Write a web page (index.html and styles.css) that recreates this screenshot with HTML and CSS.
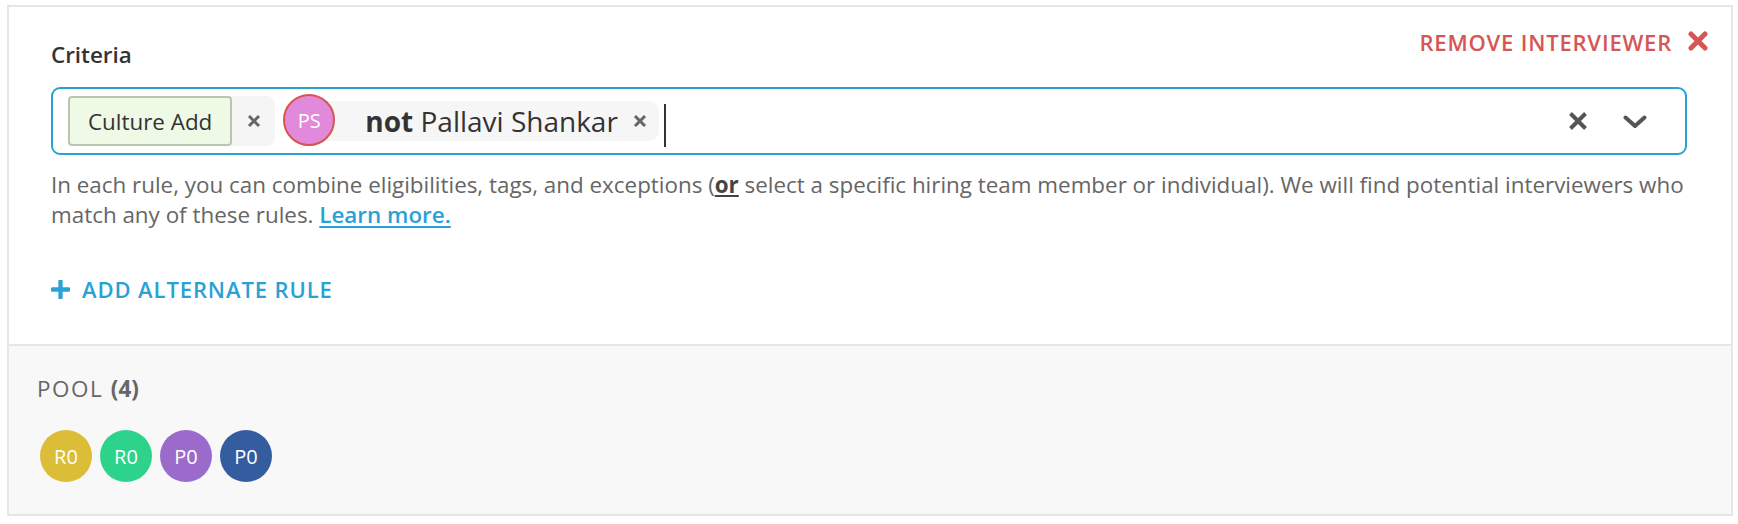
FILE: index.html
```html
<!DOCTYPE html>
<html>
<head>
<meta charset="utf-8">
<link rel="stylesheet" href="styles.css">
</head>
<body>
<div class="card">
  <section class="rule">
    <div class="rule-header">
      <div class="label">Criteria</div>
      <a class="remove">REMOVE INTERVIEWER
        <svg class="remove-x" viewBox="0 0 20 20" width="20" height="20"><path d="M3 3L17 17M17 3L3 17" stroke="#d65555" stroke-width="5" stroke-linecap="round"/></svg>
      </a>
    </div>
    <div class="select">
      <div class="values">
        <div class="tag-wrap">
          <span class="tag">Culture Add</span>
          <svg class="tag-x" viewBox="0 0 14 14" width="14" height="14"><path d="M2 2L12 12M12 2L2 12" stroke="#666" stroke-width="3"/></svg>
        </div>
        <div class="person">
          <span class="avatar ps">PS</span>
          <span class="pill"><b>not</b>&nbsp;Pallavi Shankar
            <svg class="tag-x pill-x" viewBox="0 0 14 14" width="14" height="14"><path d="M2 2L12 12M12 2L2 12" stroke="#666" stroke-width="3"/></svg>
          </span>
        </div>
        <span class="cursor"></span>
      </div>
      <div class="controls">
        <svg viewBox="0 0 20 20" width="20" height="20"><path d="M2.5 2.5L17.5 17.5M17.5 2.5L2.5 17.5" stroke="#555" stroke-width="4"/></svg>
        <svg class="chev" viewBox="0 0 24 14" width="24" height="14"><path d="M2.5 2.5L12 11L21.5 2.5" fill="none" stroke="#555" stroke-width="4" stroke-linecap="round" stroke-linejoin="round"/></svg>
      </div>
    </div>
    <p class="help">In each rule, you can combine eligibilities, tags, and exceptions (<b class="or">or</b> select a specific hiring team member or individual). We will find potential interviewers who match any of these rules. <a class="learn">Learn more.</a></p>
    <a class="add-rule">
      <svg viewBox="0 0 20 20" width="19" height="19"><path d="M10 1.5V18.5M1.5 10H18.5" stroke="#2aa3d6" stroke-width="4.5" stroke-linecap="round"/></svg>
      <span>ADD ALTERNATE RULE</span>
    </a>
  </section>
  <section class="pool">
    <div class="pool-title">POOL <b>(4)</b></div>
    <div class="pool-list">
      <span class="avatar sm yellow">R0</span>
      <span class="avatar sm green">R0</span>
      <span class="avatar sm purple">P0</span>
      <span class="avatar sm blue">P0</span>
    </div>
  </section>
</div>
</body>
</html>
```

FILE: styles.css
```css
* { box-sizing: border-box; }
html, body { margin: 0; padding: 0; background: #fff; }
body {
  font-family: "Open Sans", "Noto Sans", "Liberation Sans", sans-serif;
  color: #333;
}
.card {
  margin: 5px 5px 0 7px;
  width: 1726px;
  border: 2px solid #e6e6e6;
}
.rule {
  padding: 20px 44px 40px 42px;
  background: #fff;
  border-bottom: 2px solid #e6e6e6;
}
.rule-header {
  display: flex;
  justify-content: space-between;
  align-items: flex-start;
  margin-right: -21px;
}
.label {
  font-size: 22.4px;
  font-weight: 600;
  line-height: 30px;
  padding-top: 13px;
  color: #333;
}
.remove {
  display: flex;
  align-items: center;
  gap: 16px;
  font-size: 22px;
  font-weight: 600;
  letter-spacing: 0.8px;
  line-height: 30px;
  color: #d65555;
}
.remove-x { margin-top: -2px; }
.select {
  margin-top: 17px;
  height: 68px;
  border: 2px solid #2aa1d3;
  border-radius: 9px;
  display: flex;
  align-items: center;
  justify-content: space-between;
  padding: 0 38px 0 15px;
}
.values {
  display: flex;
  align-items: center;
}
.tag-wrap {
  display: flex;
  align-items: center;
  height: 50px;
  background: #f5f5f5;
  border-radius: 8px;
}
.tag {
  display: flex;
  align-items: center;
  height: 50px;
  padding: 0 18px 0 18px;
  border: 2px solid #b9c8ad;
  border-radius: 4px;
  background: #eef9e6;
  font-size: 22.4px;
  color: #333;
}
.tag-x { margin: 0 14px 0 15px; display: block; }
.person {
  display: flex;
  align-items: center;
  margin-left: 8px;
}
.avatar {
  display: inline-flex;
  align-items: center;
  justify-content: center;
  border-radius: 50%;
  color: #fff;
  font-size: 20px;
  flex: none;
}
.ps {
  position: relative;
  z-index: 1;
  width: 52px;
  height: 52px;
  background: #e18adc;
  border: 2px solid #d9534f;
  margin-top: -2px;
}
.pill {
  display: flex;
  align-items: center;
  height: 40px;
  margin-left: -26px;
  padding: 0 0 0 56px;
  background: #f6f6f6;
  border-radius: 10px;
  font-size: 28px;
  color: #333;
  white-space: nowrap;
}
.pill b { font-weight: 700; }
.pill-x { margin: 0 12px 0 15px; }
.cursor {
  display: block;
  width: 2px;
  height: 43px;
  background: #333;
  margin-left: 5px;
  margin-top: 9px;
}
.controls {
  display: flex;
  align-items: center;
  gap: 35px;
}
.chev { margin-top: 2px; }
.help {
  margin: 15px 0 0;
  font-size: 22.4px;
  line-height: 30px;
  color: #666;
}
.or {
  color: #444;
  font-weight: 700;
  text-decoration: underline;
}
.learn {
  color: #2aa1d6;
  font-weight: 600;
  text-decoration: underline;
  text-underline-offset: 3px;
}
.add-rule {
  display: flex;
  align-items: center;
  gap: 12px;
  margin-top: 44px;
  font-size: 22px;
  font-weight: 600;
  letter-spacing: 0.9px;
  line-height: 30px;
  color: #2aa1d6;
}
.pool {
  background: #f8f8f8;
  padding: 28px 20px 32px 28px;
}
.pool-title {
  font-size: 22.4px;
  line-height: 30px;
  color: #666;
  letter-spacing: 1.6px;
}
.pool-title b { font-weight: 700; letter-spacing: 0; }
.pool-list {
  display: flex;
  gap: 8px;
  margin-top: 26px;
  padding-left: 3px;
}
.sm {
  width: 52px;
  height: 52px;
  font-size: 20px;
}
.yellow { background: #dbbd37; }
.green { background: #2dd38b; }
.purple { background: #9b6bcb; }
.blue { background: #345d9f; }
```
